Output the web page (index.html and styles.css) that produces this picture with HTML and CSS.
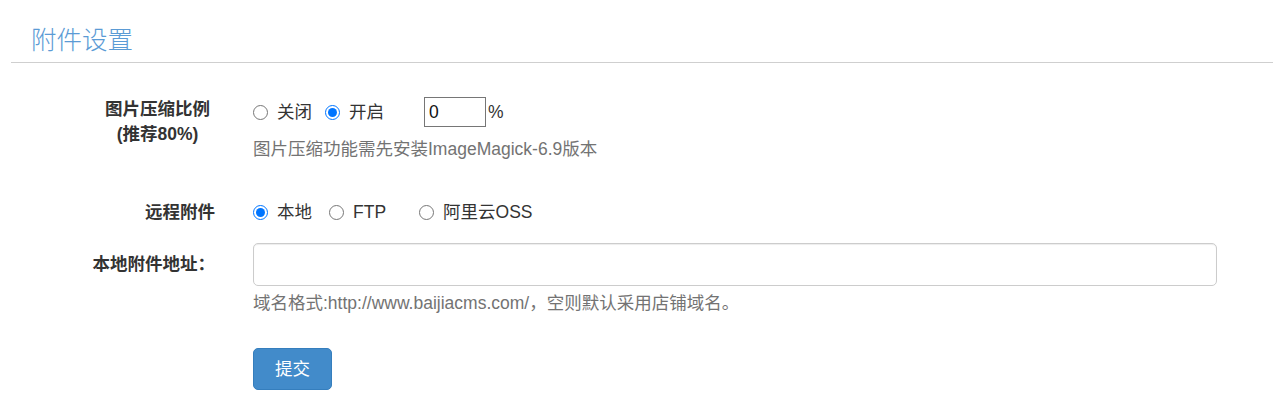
FILE: index.html
```html
<!DOCTYPE html>
<html lang="zh-CN">
<head>
<meta charset="utf-8">
<title>附件设置</title>
<link rel="stylesheet" href="styles.css">
</head>
<body>
<div class="page">
  <div class="header">
    <h3 class="title">附件设置</h3>
  </div>
  <form class="form">
    <div class="row row-compress">
      <div class="label"><span class="label-stack">图片压缩比例<br>(推荐80%)</span></div>
      <div class="controls">
        <div class="line">
          <label class="opt gap-s"><input type="radio" name="compress"><span>关闭</span></label>
          <label class="opt gap-xl"><input type="radio" name="compress" checked><span>开启</span></label>
          <input class="num" type="text" value="0"><span class="pct">%</span>
        </div>
        <div class="help help-1">图片压缩功能需先安装ImageMagick-6.9版本</div>
      </div>
    </div>

    <div class="row row-remote">
      <div class="label label-30">远程附件</div>
      <div class="controls">
        <div class="line">
          <label class="opt gap-m"><input type="radio" name="remote" checked><span>本地</span></label>
          <label class="opt gap-l"><input type="radio" name="remote"><span>FTP</span></label>
          <label class="opt"><input type="radio" name="remote"><span>阿里云OSS</span></label>
        </div>
      </div>
    </div>

    <div class="row row-url">
      <div class="label label-43">本地附件地址：</div>
      <div class="controls">
        <input class="text-input" type="text">
        <div class="help help-2">域名格式:http://www.baijiacms.com/，空则默认采用店铺域名。</div>
      </div>
    </div>

    <div class="row row-submit">
      <div class="label"></div>
      <div class="controls">
        <button class="btn" type="button">提交</button>
      </div>
    </div>
  </form>
</div>
</body>
</html>
```

FILE: styles.css
```css
html, body {
  margin: 0;
  padding: 0;
  background: #ffffff;
}

body {
  font-family: "Liberation Sans", "Noto Sans CJK SC", Arial, sans-serif;
  font-size: 17.5px;
  color: #333333;
}

.header {
  margin-left: 11px;
  padding: 25px 0 7px 20px;
  border-bottom: 1px solid #cfcfcf;
}

.title {
  margin: 0;
  font-size: 25.5px;
  line-height: 30px;
  font-weight: 300;
  color: #5b9bd5;
}

.form {
  margin: 34px 0 0 0;
}

.row {
  display: grid;
  grid-template-columns: 215px 1fr;
  column-gap: 38px;
  padding-right: 56px;
}

.label {
  text-align: right;
  font-weight: bold;
  color: #333333;
}

.label-stack {
  display: inline-block;
  text-align: center;
  line-height: 25px;
  padding-right: 5px;
}

.label-30 {
  line-height: 30px;
}

.label-43 {
  line-height: 43px;
}

.line {
  display: flex;
  align-items: center;
  height: 30px;
}

.opt {
  display: inline-flex;
  align-items: center;
  gap: 9px;
  line-height: 25px;
}

.opt input {
  width: 15px;
  height: 15px;
  margin: 0;
}

.gap-s { margin-right: 13px; }
.gap-m { margin-right: 17px; }
.gap-l { margin-right: 33px; }
.gap-xl { margin-right: 40px; }

.num {
  box-sizing: border-box;
  width: 62px;
  height: 30px;
  margin: 0;
  padding: 1px 4px;
  border: 1px solid #767676;
  border-radius: 0;
  font-family: "Liberation Sans", "Noto Sans CJK SC", Arial, sans-serif;
  font-size: 17.5px;
  color: #111111;
  outline: none;
}

.pct {
  margin-left: 2px;
}

.help {
  color: #737373;
  line-height: 25px;
}

.help-1 {
  margin-top: 9.5px;
}

.help-2 {
  margin-top: 5px;
}

.row-remote {
  margin-top: 35.5px;
}

.row-url {
  margin-top: 16px;
}

.text-input {
  display: block;
  box-sizing: border-box;
  width: 100%;
  height: 43px;
  margin: 0;
  padding: 8px 15px;
  border: 1px solid #cccccc;
  border-radius: 5px;
  font-family: "Liberation Sans", "Noto Sans CJK SC", Arial, sans-serif;
  font-size: 17.5px;
  color: #555555;
  box-shadow: inset 0 1px 1px rgba(0, 0, 0, 0.075);
  outline: none;
}

.row-submit {
  margin-top: 32px;
}

.btn {
  box-sizing: border-box;
  height: 42px;
  width: 79px;
  padding: 0;
  border: 1px solid #357ebd;
  border-radius: 5px;
  background: #428bca;
  color: #ffffff;
  font-family: "Liberation Sans", "Noto Sans CJK SC", Arial, sans-serif;
  font-size: 17.5px;
  line-height: 40px;
  cursor: pointer;
}
```
